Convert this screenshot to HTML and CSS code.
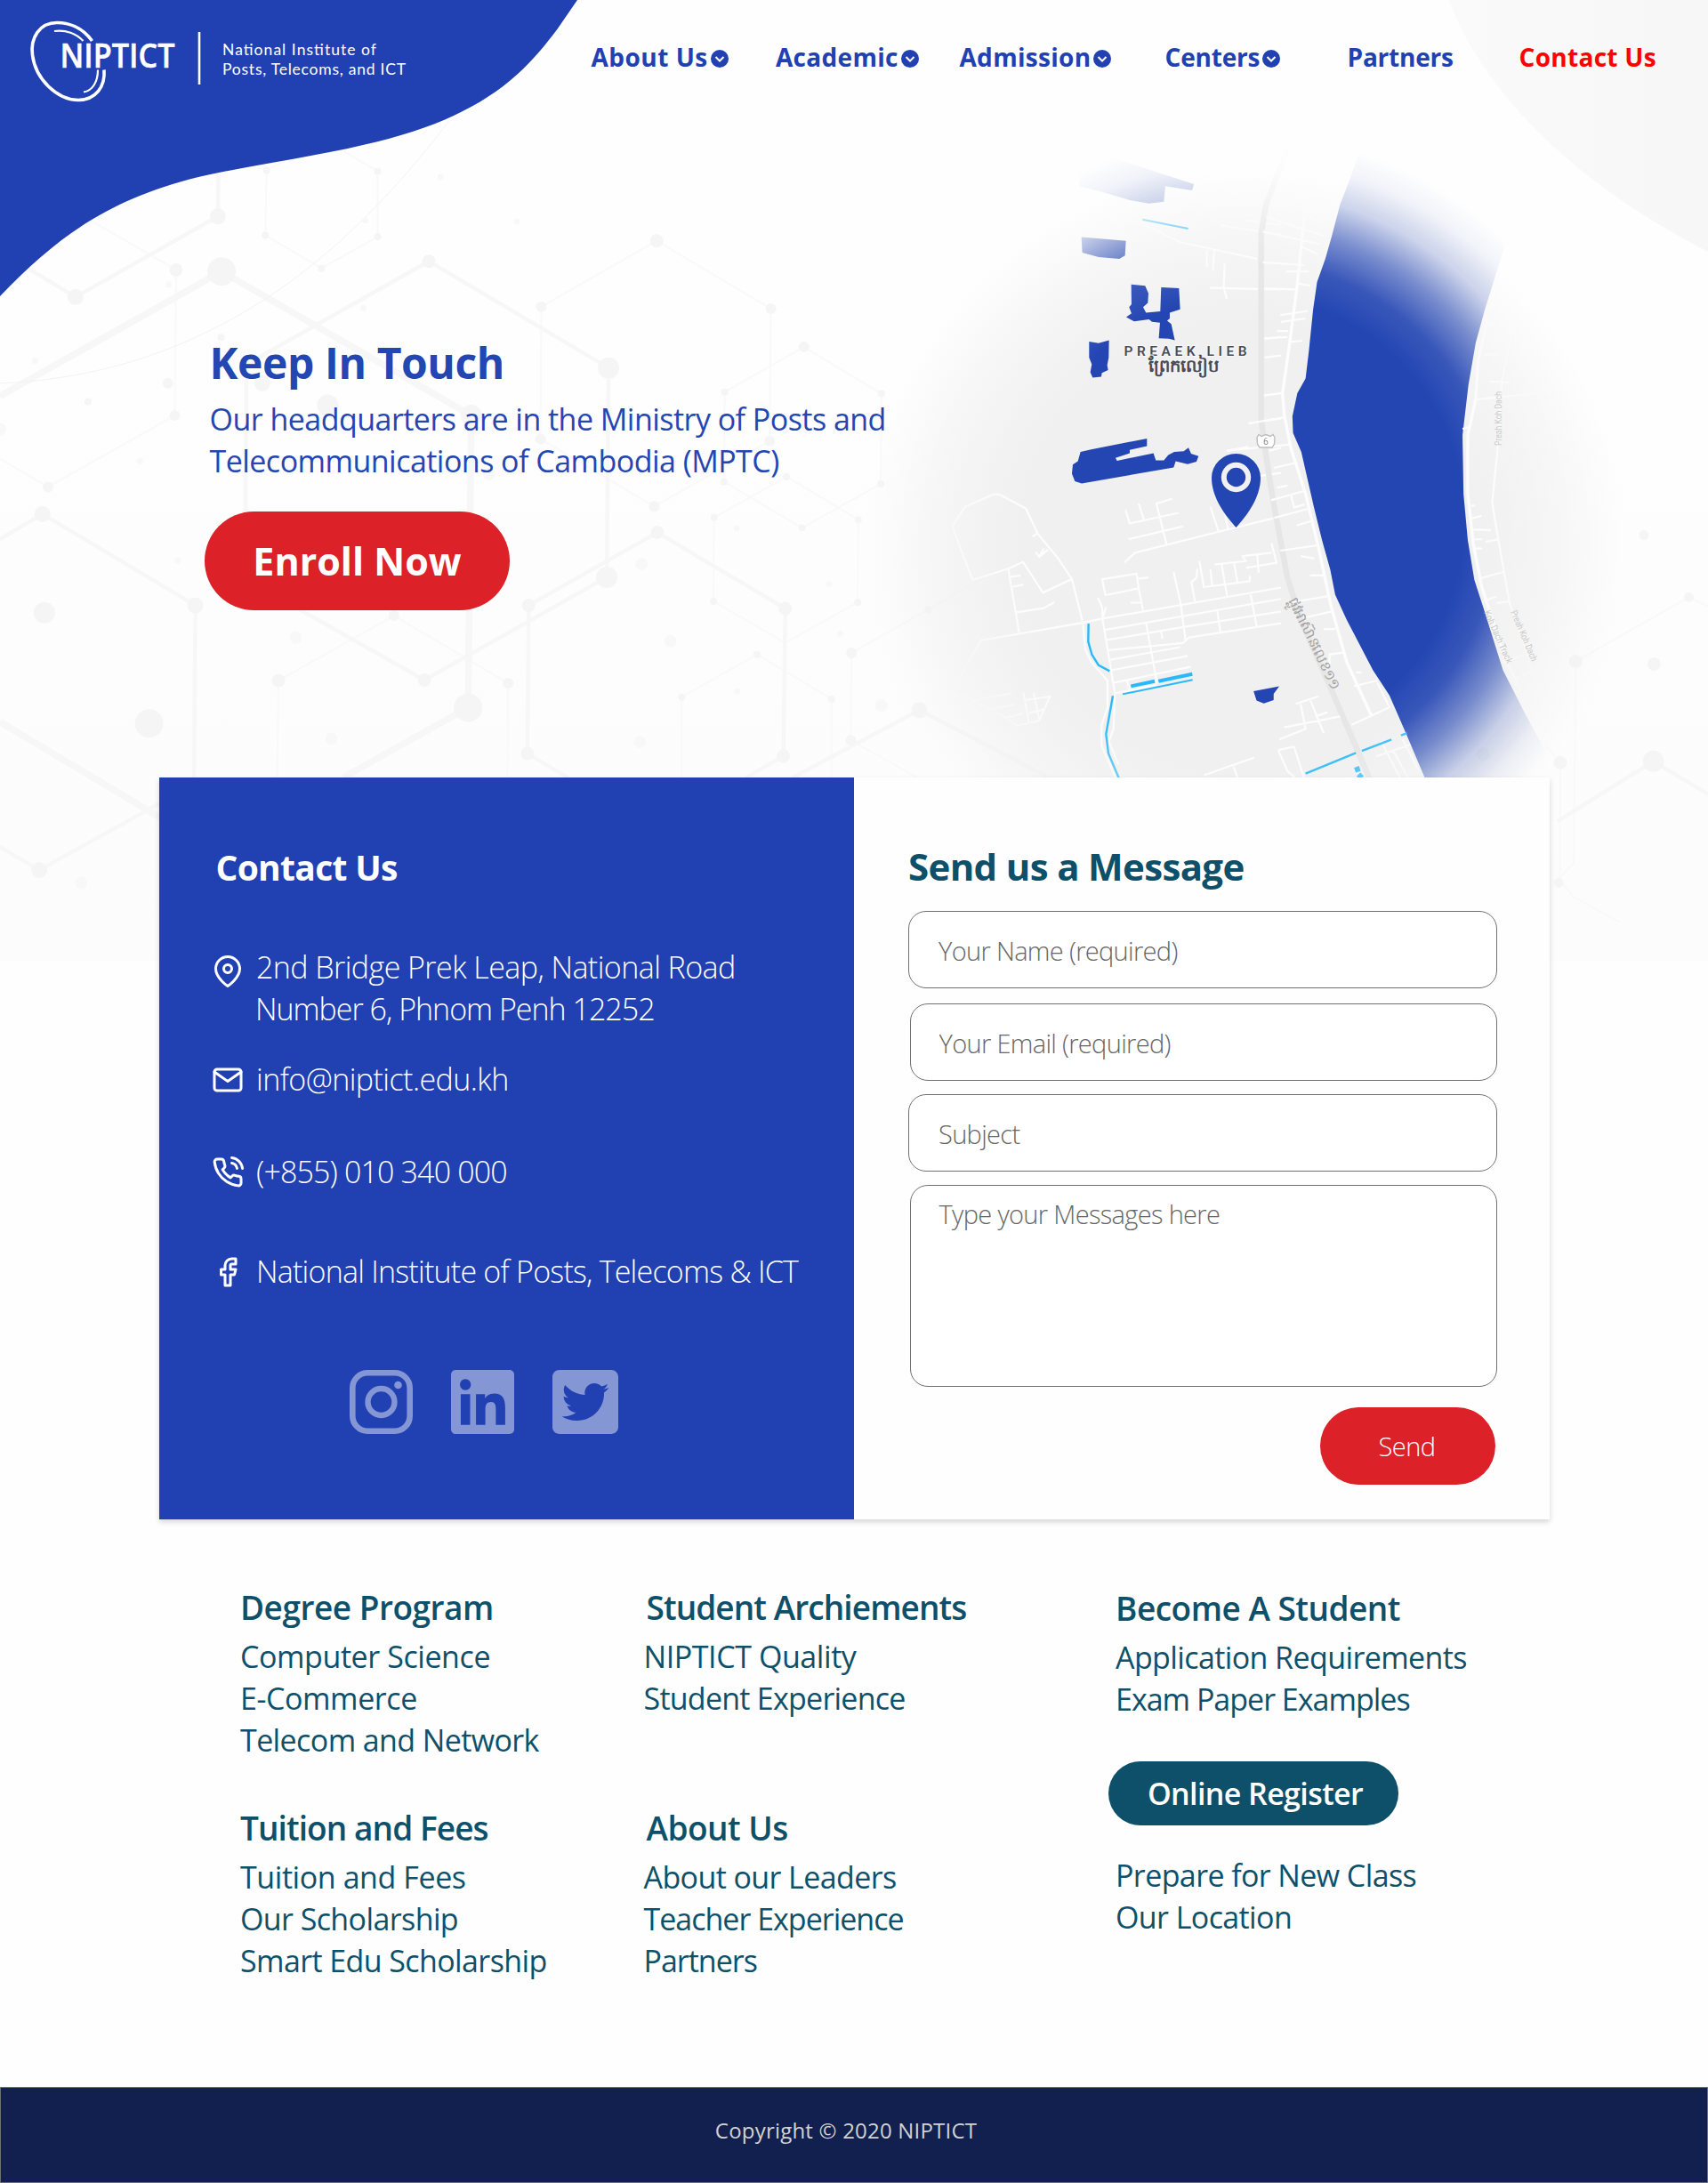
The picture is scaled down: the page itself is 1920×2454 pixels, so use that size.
FILE: index.html
```html
<!DOCTYPE html>
<html lang="en">
<head>
<meta charset="utf-8">
<title>NIPTICT – Contact Us</title>
<link rel="stylesheet" href="styles.css">
</head>
<body>
<div class="page">
  <svg class="backdrop" viewBox="0 0 1920 1080" aria-hidden="true">
    <defs>
      <linearGradient id="wash" x1="0" y1="0" x2="0" y2="1"><stop offset=".3" stop-color="#fefefe"/><stop offset="1" stop-color="#fcfcfc"/></linearGradient>
      <linearGradient id="corner" x1="0" y1="0" x2="1" y2="0"><stop offset="0" stop-color="#fafafa"/><stop offset="1" stop-color="#f7f7f7"/></linearGradient>
      <radialGradient id="land"><stop offset=".6" stop-color="#f0f0f0"/><stop offset=".8" stop-color="#f0f0f0" stop-opacity=".6"/><stop offset="1" stop-color="#f0f0f0" stop-opacity="0"/></radialGradient>
      <radialGradient id="fade" gradientUnits="userSpaceOnUse" cx="0" cy="0" r="1" gradientTransform="translate(1400 585) scale(425 435)">
        <stop offset=".58" stop-color="#fff"/><stop offset=".67" stop-color="#fff" stop-opacity=".9"/><stop offset=".76" stop-color="#fff" stop-opacity=".6"/><stop offset=".85" stop-color="#fff" stop-opacity=".22"/><stop offset=".93" stop-color="#fff" stop-opacity=".06"/><stop offset="1" stop-color="#fff" stop-opacity="0"/>
      </radialGradient>
      <mask id="mapMask" maskUnits="userSpaceOnUse" x="960" y="140" width="960" height="760"><rect x="960" y="140" width="960" height="760" fill="url(#fade)"/></mask>
    </defs>
    <rect width="1920" height="1080" fill="url(#wash)"/>

    <!-- molecule lattice -->
    <g class="lattice" transform="translate(0 180) scale(.7017 .5741)">
      <path class="l1" d="M148 120L282 215L280 500L77 640L0 585M427 20L425 147L515 212L605 150V22L540-25M427 20L480-15M1052 158L867 287L866 546L1048 678L1233 550L1235 291ZM1288 366L1161 454L1160 630L1285 720L1411 634L1412 457ZM1260 620L1144 700L1143 864L1258 945L1374 866L1375 704ZM444 1209L446 1019L631 892L814 1024L813 1209M1092 1209V1051L1213 968L1332 1055V1209M1600 800L1487 880L1364 965L1363 1136L1470 1209"/>
      <path class="l2" d="M350 0L349 110L121 268L45 212M393 700L395 400L687 198L975 407L972 817L680 1018L480 880M0 742L68 693L313 872L311 1209M910 1209L845 1162L847 872L1053 729L1258 878L1255 1167L1195 1209M255 1260L63 1390L0 1345M1270 1209L1473 1077L1680 1209"/>
      <path class="l3" d="M0 462L355 218L755 500L750 1072L550 1209M0 1100L260 1290"/>
      <path class="arc" d="M720-78C560 180 340 420 0 437"/>
      <path class="dot" stroke-width="32" d="M355 218h0M750 1072h0M239 1103h0"/>
      <path class="dot" stroke-width="24" d="M525 480h0M71 886h0M755 500h0M975 407h0M972 817h0"/>
      <path class="dot" stroke-width="18" d="M349 110h0M313 872h0M68 693h0M63 1390h0M1473 1077h0M121 268h0M420 437h0"/>
      <path class="dot" stroke-width="15" d="M282 215h0M687 198h0M1053 729h0M1258 878h0M680 1018h0M1052 158h0M446 1019h0M847 872h0M845 1162h0M1255 1167h0"/>
      <path class="dot faint" stroke-width="14" d="M0 527h0M474 935h0M1074 942h0M130 1415h0M531 1133h0M1025 1139h0M1412 1068h0M1028 791h0M783 615h0"/>
      <path class="dot" stroke-width="12" d="M77 640h0M269 437h0M867 287h0M1235 291h0M1288 366h0M631 892h0M814 1024h0M1048 678h0M1233 550h0M866 546h0M280 500h0M1364 965h0M1363 1136h0"/>
      <path class="dot" stroke-width="8" d="M427 20h0M425 147h0M515 212h0M605 150h0M605 22h0M1161 454h0M1160 630h0M1412 457h0M1411 634h0M1285 720h0M1260 620h0M1144 700h0M1375 704h0M1143 864h0M1374 866h0M1213 968h0M1092 1051h0M1332 1055h0M141 473h0M354 347h0M1487 880h0"/>
      <path class="dot faint" stroke-width="7" d="M706 33h0M828 120h0M585 118h0M582 290h0M224 589h0M285 784h0M1180 721h0M1328 830h0M1346 927h0M1181 1040h0M56 393h0M270 244h0"/>
    </g>
    <g class="lattice" transform="translate(1340 140) scale(.3699 .4719)">
      <path class="l1" d="M1600 1160L1510 1126L1166 1279L1160 1760L1110 1800"/>
      <path class="l1" d="M1075 1480L1119 1520L1118 1800L1160 1840L1300 1900"/>
      <path class="l2" d="M1110 1660L1402 1517L1600 1610"/>
      <path class="dot" stroke-width="24" d="M1402 1517h0"/>
      <path class="dot" stroke-width="15" d="M1166 1279h0M1404 1285h0M1119 1520h0M885 1500h0"/>
      <path class="dot" stroke-width="11" d="M1510 1126h0M1373 978h0M1114 1806h0"/>
    </g>

    <path fill="url(#corner)" d="M1629 0C1650 60 1720 180 1920 283V0Z"/>
    <path fill="#2141b3" d="M0 0H649L627 32C589 83 543 133 408 163C349 177 274 187 223 199C126 223 67 263 0 333Z"/>

    <!-- city map -->
    <ellipse cx="1400" cy="615" rx="425" ry="425" fill="url(#land)"/>
    <g mask="url(#mapMask)">
      <g class="roads" transform="translate(960 140) scale(.3333 .4719)">
        <path class="road" d="M400 1085L331 957L375 910L470 881H490L580 915L620 975L690 1035L735 1083L772 1187L780 1250L800 1280L855 1325L855 1390L835 1430V1480L890 1568M400 1085L520 1058L570 1042L637 1115L735 1083M520 1058L557 1210M523 1078L562 1074M530 1102L572 1096M548 1162L640 1152L676 1138M640 1010L625 1030L612 1018M625 1030L655 1012M602 982L618 974M325 1355L428 1229L770 1187L838 1177L1440 1103M325 1355L390 1368L510 1412L548 1432L625 1420L660 1363M400 1372L530 1355M440 1396L540 1382M500 1415L570 1403M572 1354L590 1425M606 1354L626 1420M572 1372L665 1362M590 1402L642 1393"/>
        <path class="road" d="M822 1127L837 1150L838 1177L880 1355L875 1440L860 1470L892 1525M838 1177L850 1150M700 205L960 232L1100 280L1360 320M1190 300V340M1215 300L1210 348M1250 330L1247 390L1258 415M1200 389L1440 393M1236 240L1440 262M1322 228L1440 240M916 918L930 950L1095 925M960 903L978 942M926 988L1110 957M1074 891L1020 903L1055 1003M912 1043L948 1020L1230 970L1420 937M1202 910L1230 970M1250 925L1262 965M837 1083L953 1070L960 1105L848 1121ZM957 1082L993 1079M933 1139H970M960 1105L975 1158M1078 1066L1102 1142L1118 1228M1165 1040L1180 1102L1335 1088V1075M1215 1048L1322 1040L1310 1028L1408 1020M1240 1048L1258 1122M1282 1044L1293 1090M1408 997L1425 1044L1322 1056M1360 1022L1365 1068M1158 1058L1155 1080L1138 1090L1150 1136M1202 1060L1208 1100M845 1204L1440 1130M852 1228L1120 1196L1440 1160M858 1252L1110 1235M1110 1235L1130 1222L1440 1188M865 1275L1100 1245M868 1300L1125 1266M874 1330L1135 1292M880 1355L1020 1335M985 1187L1022 1332M1036 1206L1040 1225M1225 1158L1236 1210M1338 1120L1358 1196M920 1325L930 1345M1180 1550L1350 1508M1280 1530L1300 1568"/>
        <path class="road" d="M1260 777L1330 768M1385 510L1440 506M1385 555L1440 550M1380 646L1440 640M1330 712L1440 700M1400 777L1440 770M1340 840L1440 830"/>
      </g>
      <g class="roads" transform="translate(1340 140) scale(.3699 .4719)">
        <path class="highway" d="M290 60L225 190L210 260V700L225 790L245 890L290 1080L330 1180L420 1340L545 1568"/>
        <path class="road wide" d="M385 110L345 190L320 380L295 530L275 640L280 690L300 770L345 880L385 1010L420 1140L470 1280L545 1408"/>
        <path class="road" d="M225 220L400 265M215 255L390 285M345 200L418 208M345 215L400 235M330 290L385 310M285 350H355M320 378L360 384M215 328L340 335M220 390L315 393M268 454L352 444M270 470L345 462M258 492H292M220 510L290 506M298 518L335 515M220 645L275 640M172 712L278 698M105 777L300 762M248 818L320 805M240 895L345 872M258 865L290 860M300 880L310 912L342 905M250 937L355 915M318 955L360 945M268 1015L385 1002M330 1028L372 1034M358 1074H398M300 1138L412 1124M340 1175L425 1160M400 1202H435M418 1285V1262L462 1258M485 1430L600 1388L560 1325L492 1338M498 1305H515M315 1380L385 1362M280 1436L450 1410M265 1465L345 1440L330 1380M360 1372L400 1450M375 1410L412 1400M262 1490L290 1540L330 1568M262 1490L310 1482L345 1568M560 1505L690 1470M575 1470L640 1568M610 1490L665 1568M640 1465L690 1540"/>
      </g>
      <g transform="translate(1340 140) scale(.3699 .4719)">
        <path fill="#2446b3" d="M520 40L480 130L450 190L425 265L405 320L380 375L368 440L355 540L345 605L320 640L305 695L307 735L332 780L370 910L395 990L420 1060L435 1120L470 1180L550 1300L600 1360L650 1450L715 1570H1130L1065 1480L1010 1400L945 1300L885 1150L858 1085L838 990L825 880L822 740L840 620L862 520L890 440L930 340L970 240L1030 130L1070 40Z"/>
        <path class="road wide" d="M975 260L905 440L870 560L862 655L838 740V880L855 1000L880 1100L950 1270L1000 1350"/>
        <path class="road" d="M1000 370L970 500L942 610L928 780L912 900L930 985L965 1140L1030 1290L1075 1370M862 655L1245 625M905 612L965 614M898 475H945M885 548H930M845 720L822 725M848 908H860M850 938L880 932M855 965L908 966M858 988H882M860 1010H882M892 994L930 988M870 1083L945 1066M888 1135L925 1124M925 1140L965 1136M945 1280L1000 1265M980 1320L1032 1302M1148 630V685M1130 588L1200 583"/>
        <path fill="#2446b3" d="M187 1350L265 1338L248 1356V1371L218 1379L196 1372Z"/>
      </g>
      <g transform="translate(960 140) scale(.3333 .4719)" fill="#2446b3">
        <path d="M760 75L830 70L1147 142L1140 157L1050 147L1045 184L995 188L930 180L845 162L760 147ZM767 268L917 277L914 312L895 320L825 316L770 305ZM935 381L982 384L993 402L991 425L975 435L985 448L1033 445L1036 388L1096 390L1100 440L1065 448V462L1056 467L1070 475L1082 514L1062 510L1028 509L1032 472L1005 470L995 464L945 469L918 459L936 450L928 435L936 428ZM793 517L825 521L860 514L859 555L854 573L857 585L836 592L834 601L805 603L797 590L802 571L793 555ZM764 780L800 774L988 748V766L930 775V783L882 794L887 801L1010 783L1018 800H1045L1060 787L1080 780L1112 778L1128 770L1137 784L1162 790L1155 803L1125 809L1085 802L1078 817L768 855L745 850L735 832L738 810L755 802Z"/>
        <path class="water" stroke-width="2" d="M973 226L1127 248M906 1357L1142 1323"/>
        <path class="water" stroke-width="2.4" d="M791 1189L790 1232L802 1262L825 1288L862 1302M873 1361L850 1452L858 1498L900 1568"/>
        <path class="water" stroke-width="4" d="M934 1338L1014 1326M1027 1326L1141 1309"/>
      </g>
      <g transform="translate(1340 140) scale(.3699 .4719)"><path class="water" stroke-width="2.4" d="M345 1546L498 1497M516 1492L606 1465M635 1455L653 1450"/><path class="water" stroke-width="6" d="M495 1538L510 1534M506 1548L516 1556"/></g>
      <path d="M1415 488.500L1418 490.500L1423 488.500L1428 490.500L1431 488.500L1433 492L1432.500 499L1430 503H1416L1413.500 499L1413 492Z" fill="#fff" stroke="#bdbdbd" stroke-width="1.400"/>
      <text x="1420" y="499.500" font-size="10.500" class="shield">6</text>
      <path d="M1389.500 593C1378 580 1362 560 1362 537A27.500 27 0 0 1 1417 537C1417 560 1401 580 1389.500 593Z" fill="#2446b3"/>
      <circle cx="1389.500" cy="536.500" r="13.700" fill="none" stroke="#f1f1f1" stroke-width="6"/>
    </g>
    <text x="1263.500" y="400" font-size="15.500" textLength="138" class="place">PREAEK LIEB</text>
    <text x="1291" y="418" font-size="19.500" class="place">ព្រែកលៀប</text>
    <text class="street" font-size="16.500" textLength="113" lengthAdjust="spacingAndGlyphs" transform="translate(1448 675) rotate(64)">ផ្លូវអាស៊ានលេខ១១</text>
    <text class="lane" font-size="10.500" textLength="61" lengthAdjust="spacingAndGlyphs" transform="translate(1688 501) rotate(-90)">Preah Koh Dach</text>
    <text class="lane" font-size="10.500" textLength="61" lengthAdjust="spacingAndGlyphs" transform="translate(1698 688) rotate(67)">Preah Koh Dach</text>
    <text class="lane" font-size="10.500" textLength="64" lengthAdjust="spacingAndGlyphs" transform="translate(1668 688) rotate(66)">Koh Dach Track</text>
  </svg>

  <header class="header">
    <svg class="logo" viewBox="0 0 480 130" role="img" aria-label="NIPTICT">
      <g fill="none" stroke="#fff">
        <path stroke-width="3.600" d="M103.500 46C92 30 76 25.500 64 25.500C44 25.500 34 43 36.500 62C40 89 64 112 88 112.500C108 112.500 118.500 97 117 78.500"/>
        <path stroke-width="2.200" d="M61 35C74 33 86 38 93.500 46M110 78.500C110 92 104 102 94 103.500"/>
        <path stroke-width="2.600" d="M224 36V95"/>
      </g>
      <text class="logo-name" x="67.500" y="76" textLength="129" lengthAdjust="spacingAndGlyphs">NIPTICT</text>
      <text class="logo-tag" x="250" y="61.800" textLength="173">National Institute of</text>
      <text class="logo-tag" x="250" y="84.300" textLength="206">Posts, Telecoms, and ICT</text>
    </svg>
    <nav class="nav">
      <a class="wide-text">About Us<svg viewBox="0 0 20 20"><circle cx="10" cy="10" r="10"/><path d="M5.500 8L10 12.500L14.500 8"/></svg></a>
      <a>Academic<svg viewBox="0 0 20 20"><circle cx="10" cy="10" r="10"/><path d="M5.500 8L10 12.500L14.500 8"/></svg></a>
      <a>Admission<svg viewBox="0 0 20 20"><circle cx="10" cy="10" r="10"/><path d="M5.500 8L10 12.500L14.500 8"/></svg></a>
      <a class="tight-text">Centers<svg viewBox="0 0 20 20"><circle cx="10" cy="10" r="10"/><path d="M5.500 8L10 12.500L14.500 8"/></svg></a>
      <a class="tight-text">Partners</a>
      <a class="active">Contact Us</a>
    </nav>
  </header>

  <section class="hero">
    <h1>Keep In Touch</h1>
    <p>Our headquarters are in the Ministry of Posts and<br>Telecommunications of Cambodia (MPTC)</p>
    <a class="enroll">Enroll Now</a>
  </section>

  <main class="card">
    <section class="contact">
      <h2>Contact Us</h2>
      <ul class="details">
        <li class="address"><svg class="icon" viewBox="0 0 24 24"><path d="M21 10c0 7-9 13-9 13s-9-6-9-13a9 9 0 0 1 18 0z"/><circle cx="12" cy="10" r="3"/></svg><span>2nd Bridge Prek Leap, National Road<br><span class="line2">Number 6, Phnom Penh 12252</span></span></li>
        <li class="email"><svg class="icon" viewBox="0 0 24 24"><path d="M4 4h16c1.100 0 2 .9 2 2v12c0 1.100-.9 2-2 2H4c-1.100 0-2-.9-2-2V6c0-1.100.9-2 2-2z"/><path d="M22 6l-10 7L2 6"/></svg><span>info@niptict.edu.kh</span></li>
        <li class="phone"><svg class="icon" viewBox="0 0 24 24"><path d="M15.050 5A5 5 0 0 1 19 8.950M15.050 1A9 9 0 0 1 23 8.940M22 16.920v3a2 2 0 0 1-2.180 2 19.790 19.790 0 0 1-8.630-3.070 19.500 19.500 0 0 1-6-6 19.790 19.790 0 0 1-3.070-8.670A2 2 0 0 1 4.110 2h3a2 2 0 0 1 2 1.720 12.840 12.840 0 0 0 .7 2.810 2 2 0 0 1-.45 2.110L8.090 9.910a16 16 0 0 0 6 6l1.270-1.270a2 2 0 0 1 2.110-.45 12.840 12.840 0 0 0 2.810.7A2 2 0 0 1 22 16.920z"/></svg><span>(+855) 010 340 000</span></li>
        <li class="facebook"><svg class="icon" viewBox="0 0 24 24"><path d="M18 2h-3a5 5 0 0 0-5 5v3H7v4h3v8h4v-8h3l1-4h-4V7a1 1 0 0 1 1-1h3z"/></svg><span>National Institute of Posts, Telecoms &amp; ICT</span></li>
      </ul>
      <div class="social">
        <svg width="71" height="72" viewBox="0 0 71 72"><rect x="3.300" y="3.300" width="64.400" height="65.400" rx="17" fill="none" stroke="#8496d3" stroke-width="6.600"/><circle cx="35.500" cy="36" r="15" fill="none" stroke="#8496d3" stroke-width="6.400"/><circle cx="54.500" cy="17" r="4.300"/></svg>
        <svg width="71" height="72" viewBox="0 32 448 448" preserveAspectRatio="none"><path d="M416 32H31.900C14.300 32 0 46.500 0 64.300v383.400C0 465.500 14.300 480 31.900 480H416c17.600 0 32-14.500 32-32.300V64.300c0-17.800-14.400-32.300-32-32.300zM135.400 416H69V202.200h66.500V416zm-33.200-243c-21.300 0-38.500-17.300-38.500-38.500S80.900 96 102.200 96c21.200 0 38.500 17.300 38.500 38.500 0 21.300-17.200 38.500-38.500 38.500zm282.100 243h-66.400V312c0-24.800-.5-56.700-34.500-56.700-34.600 0-39.900 27-39.900 54.900V416h-66.400V202.200h63.700v29.200h.9c8.900-16.800 30.600-34.500 62.900-34.500 67.200 0 79.700 44.300 79.700 101.900V416z"/></svg>
        <svg width="74" height="72" viewBox="0 32 448 448" preserveAspectRatio="none"><path d="M400 32H48C21.500 32 0 53.500 0 80v352c0 26.500 21.500 48 48 48h352c26.500 0 48-21.500 48-48V80c0-26.500-21.500-48-48-48zm-48.900 158.800c.2 2.800.2 5.700.2 8.500 0 86.700-66 186.600-186.600 186.600-37.200 0-71.700-10.800-100.700-29.400 5.300.6 10.400.8 15.800.8 30.700 0 58.900-10.400 81.400-28-28.800-.6-53-19.500-61.300-45.500 10.100 1.500 19.200 1.500 29.600-1.200-30-6.100-52.500-32.500-52.500-64.400v-.8c8.700 4.900 18.900 7.900 29.600 8.300a65.447 65.447 0 0 1-29.200-54.600c0-12.200 3.200-23.400 8.900-33.100 32.300 39.800 80.800 65.800 135.200 68.600-9.300-44.500 24-80.600 64-80.600 18.900 0 35.900 7.900 47.900 20.700 14.800-2.800 29-8.300 41.600-15.800-4.900 15.200-15.200 28-28.800 36.100 13.200-1.400 26-5.100 37.800-10.200-8.900 13.100-20.100 24.700-32.900 34z"/></svg>
      </div>
    </section>
    <form class="message">
      <h2>Send us a Message</h2>
      <input class="field" type="text" placeholder="Your Name (required)">
      <input class="field inset" type="text" placeholder="Your Email (required)">
      <input class="field" type="text" placeholder="Subject">
      <textarea class="field inset" placeholder="Type your Messages here"></textarea>
      <button class="send" type="button">Send</button>
    </form>
  </main>

  <section class="links">
    <div class="column">
      <div class="group"><h3>Degree Program</h3><a class="loose">Computer Science</a><a class="loose">E-Commerce</a><a>Telecom and Network</a></div>
      <div class="group"><h3 class="close">Tuition and Fees</h3><a class="loose">Tuition and Fees</a><a>Our Scholarship</a><a>Smart Edu Scholarship</a></div>
    </div>
    <div class="column middle">
      <div class="group"><h3 class="close">Student Archiements</h3><a class="loose">NIPTICT Quality</a><a class="snug">Student Experience</a></div>
      <div class="group"><h3>About Us</h3><a>About our Leaders</a><a class="close">Teacher Experience</a><a class="close">Partners</a></div>
    </div>
    <div class="column last">
      <h3>Become A Student</h3><a>Application Requirements</a><a class="close">Exam Paper Examples</a>
      <a class="register">Online Register</a>
      <a>Prepare for New Class</a><a>Our Location</a>
    </div>
  </section>

  <footer class="footer">Copyright © 2020 NIPTICT</footer>
</div>
</body>
</html>
```
FILE: styles.css
```css
* { box-sizing: border-box; }

body {
  margin: 0;
  background: #fefefe;
  font-family: "Open Sans", "Noto Sans", sans-serif;
}

h1, h2, h3, p, ul { margin: 0; padding: 0; }

.page { position: relative; width: 1920px; }

/* decorative artwork behind the header and hero */
.backdrop { position: absolute; top: 0; left: 0; width: 1920px; height: 1080px; z-index: -1; }
.lattice path { fill: none; stroke: #f7f7f7; vector-effect: non-scaling-stroke; }
.lattice .l1 { stroke-width: 2; stroke: #f9f9f9; }
.lattice .l2 { stroke-width: 4.5; }
.lattice .l3 { stroke-width: 7.5; }
.lattice .arc { stroke-width: 1; stroke: #f3f3f3; }
.lattice .dot { stroke-linecap: round; stroke: #f5f5f5; }
.lattice .faint { stroke: #f8f8f8; }
.road, .highway, .water { fill: none; vector-effect: non-scaling-stroke; stroke-linejoin: round; }
.road { stroke: #fdfdfd; stroke-width: 2.2; }
.road.wide { stroke-width: 3.4; }
.highway { stroke: #e6e6e6; stroke-width: 6.5; }
.water { stroke: #29b9fb; }
.place { font-family: Roboto, sans-serif; font-weight: 600; fill: #4a4d58; paint-order: stroke; stroke: #f8f8f8; stroke-width: 2px; }
.street { font-weight: 500; fill: #a2a2a2; }
.lane { font-family: Roboto, sans-serif; fill: #cacaca; }
.shield { font-family: Roboto, sans-serif; fill: #8d8d8d; }

/* header */
.header { display: flex; height: 130px; }
.logo { width: 480px; height: 130px; flex: none; }
.logo-name { font: 600 37px "Open Sans", sans-serif; fill: #fff; stroke: #fff; stroke-width: .5px; }
.logo-tag { font: 400 17.5px Lato, sans-serif; fill: #fff; }
.nav {
  display: grid;
  grid-template-columns: 207.5px 206.5px 231px 205px 193px auto;
  margin-left: 184.5px;
  padding-top: 44px;
  align-content: start;
}
.nav a { display: flex; align-items: center; font-size: 28px; font-weight: 700; line-height: 40px; letter-spacing: .3px; color: #2141b3; }
.nav .wide-text { letter-spacing: .5px; }
.nav .tight-text { letter-spacing: -.2px; }
.nav .active { color: #f00; }
.nav svg { width: 20px; height: 20px; margin: 3px 0 0 3px; fill: #2141b3; }
.nav path { fill: none; stroke: #fff; stroke-width: 2; }

/* hero */
.hero { height: 744px; padding: 247.5px 0 0 235.5px; color: #2446b3; }
.hero h1 { font-size: 48px; line-height: 60px; letter-spacing: -.4px; }
.hero p { margin-top: 10px; font-size: 34px; line-height: 47px; letter-spacing: -.53px; }
.enroll {
  display: flex;
  align-items: center;
  justify-content: center;
  width: 343px;
  height: 111px;
  margin: 33.5px 0 0 -5.5px;
  border-radius: 56px;
  background: #dc2128;
  color: #fff;
  font-size: 43px;
  font-weight: 700;
}

/* contact card */
.card {
  display: grid;
  grid-template-columns: 781px 782px;
  width: 1563px;
  height: 834px;
  margin-left: 179px;
  background: #fefefe;
  box-shadow: 0 3px 6px rgba(0, 0, 0, .16);
}
.contact { padding: 76px 0 0 59px; background: #2141b3; color: #fff; }
.contact h2 { margin-left: 4.5px; font-size: 39px; line-height: 50px; letter-spacing: -.69px; }
.details { list-style: none; padding-top: 64px; }
.details li { display: grid; grid-template-columns: 36px auto; gap: 14px; align-items: center; font-size: 34px; font-weight: 300; line-height: 47px; letter-spacing: -.56px; }
.details .address { align-items: start; }
.address .icon { margin-top: 10px; }
.line2 { margin-left: -1px; letter-spacing: -1px; }
.details .email { margin-top: 31.5px; }
.details .phone { margin-top: 57.5px; letter-spacing: -.86px; }
.details .facebook { margin-top: 65px; letter-spacing: -.77px; }
.icon { width: 36px; height: 36px; margin-top: 1px; fill: none; stroke: #fff; stroke-width: 2; stroke-linecap: round; stroke-linejoin: round; overflow: visible; }
.social { display: flex; gap: 43px; margin: 87px 0 0 155px; fill: #8496d3; }

.message { display: flex; flex-direction: column; padding: 73px 0 0 61px; color: #0e5069; }
.message h2 { font-size: 42px; line-height: 54px; letter-spacing: -.66px; margin-bottom: 23px; }
.field {
  width: 662px;
  height: 87px;
  margin: 0 0 15px;
  padding: 2px 33px 0;
  border: 1px solid #707070;
  border-radius: 20px;
  background: #fff;
  font: 300 29px/40px "Open Sans", sans-serif;
  letter-spacing: -.67px;
  resize: none;
}
.field::placeholder { color: #666; opacity: 1; }
.field.inset { width: 660.5px; margin-left: 1.5px; margin-bottom: 15px; padding-left: 32px; }
.field:nth-of-type(1) { margin-bottom: 17px; }
textarea.field.inset { height: 227px; margin-bottom: 23px; padding-top: 12px; }
.send {
  width: 197px;
  height: 87px;
  margin-left: 463px;
  padding: 0 8px 1px 6px;
  border: 0;
  border-radius: 44px;
  background: #dc2128;
  color: #fff;
  font: 300 29px "Open Sans", sans-serif;
  letter-spacing: -.5px;
}

/* link columns */
.links { display: grid; grid-template-columns: 453.5px 530.5px auto; height: 638px; padding: 74px 0 0 270px; color: #0e5069; }
.column { display: flex; flex-direction: column; }
.column.last { padding-top: 1px; }
.group { display: flex; flex-direction: column; height: 248px; }
.links h3 { margin-bottom: 7px; font-size: 37px; font-weight: 600; line-height: 50px; letter-spacing: -.5px; }
.links h3.close { letter-spacing: -.92px; }
.middle h3 { margin-left: 3px; }
.links a { font-size: 34px; line-height: 47px; letter-spacing: -.6px; }
.links a.snug { letter-spacing: -.75px; }
.links a.close { letter-spacing: -1px; }
.links a.loose { letter-spacing: -.42px; }
.links a.register {
  display: flex;
  align-items: center;
  justify-content: center;
  width: 326px;
  height: 72px;
  margin: 46px 0 32.5px -8.5px;
  padding-left: 5px;
  border-radius: 36px;
  background: #0e5069;
  color: #fff;
  font-weight: 600;
}

.footer {
  height: 108px;
  padding: 31px 18px 0 0;
  border: 1px solid #707070;
  background: #12204f;
  color: #d2d2d2;
  font-size: 24px;
  line-height: 34px;
  letter-spacing: .2px;
  text-align: center;
}
```
